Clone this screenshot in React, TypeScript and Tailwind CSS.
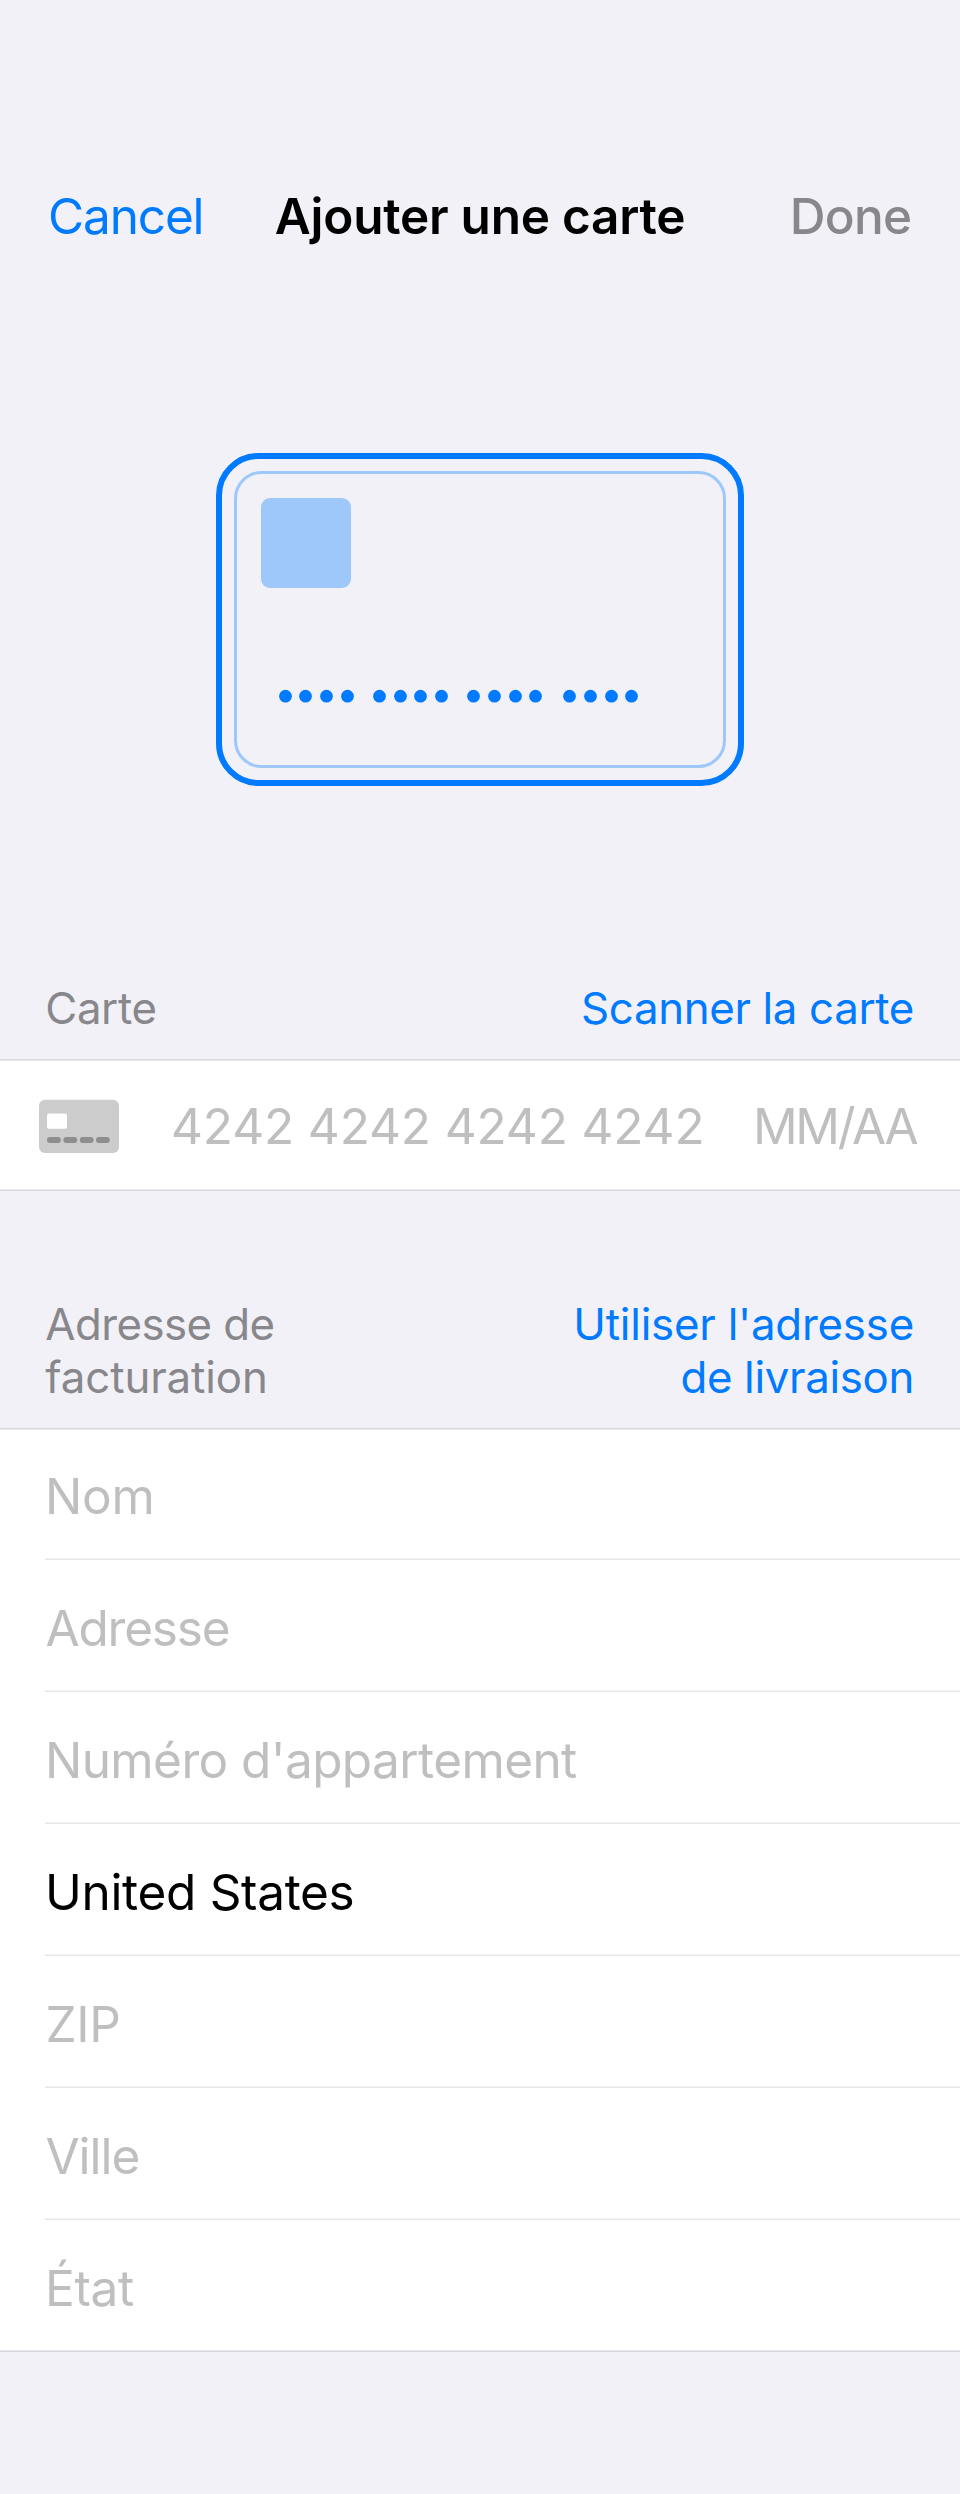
type FieldProps = { text: string; spacing: string; inset: string; filled?: boolean; last?: boolean };

const fields: FieldProps[] = [
  { text: 'Nom', spacing: 'tracking-[-0.29px]', inset: 'pl-[45px]' },
  { text: 'Adresse', spacing: 'tracking-[-1.2px]', inset: 'pl-[45.5px]' },
  { text: "Numéro d'appartement", spacing: 'tracking-[-0.6px]', inset: 'pl-[45px]' },
  { text: 'United States', spacing: 'tracking-[-0.32px]', inset: 'pl-[45px]', filled: true },
  { text: 'ZIP', spacing: 'tracking-[-0.36px]', inset: 'pl-[45.5px]' },
  { text: 'Ville', spacing: 'tracking-[-1.05px]', inset: 'pl-[45.5px]' },
  { text: 'État', spacing: 'tracking-[-0.3px]', inset: 'pl-[45px]', last: true },
];

function Field({ text, spacing, inset, filled, last }: FieldProps) {
  return (
    <div className="flex flex-1 flex-col justify-end">
      <div
        className={`pb-[32px] text-[49.5px] leading-[60px] whitespace-nowrap ${inset} ${spacing} ${filled ? 'text-black' : 'text-[#bfbfbf]'}`}
      >
        {text}
      </div>
      {!last && <div className="ml-[45px] h-[2px] border-b border-[#e6e6e7] bg-[#f4f4f5]" />}
    </div>
  );
}

function CardIllustration() {
  const dots = [
    285.5, 305.5, 326.5, 347.5, 379.5, 400.5, 420.5, 441.5, 473.5, 494.5, 515.5, 535.5, 569.5, 590.5, 611.5, 631.5,
  ];
  return (
    <svg width="528" height="333" viewBox="216 453 528 333" fill="none" aria-hidden="true">
      <rect x="219" y="456" width="522" height="327" rx="39.5" stroke="#007aff" strokeWidth="6" />
      <rect x="235.5" y="472.5" width="489" height="294" rx="26" stroke="#9fc8fa" strokeWidth="3" />
      <rect x="261" y="498" width="90" height="90" rx="9" fill="#9fc8fa" />
      {dots.map((x) => (
        <circle key={x} cx={x} cy="696.2" r="6.35" fill="#007aff" />
      ))}
    </svg>
  );
}

function CardIcon() {
  return (
    <svg className="mt-[38px] self-start" width="80" height="55" viewBox="39 1099 80 55" aria-hidden="true">
      <rect x="39" y="1099.8" width="80" height="53.3" rx="6" fill="#cccccc" />
      <rect x="47" y="1113.4" width="20" height="15.3" rx="2" fill="#fff" />
      {[47, 63.4, 79.8, 96].map((x) => (
        <rect key={x} x={x} y="1136.9" width="13.8" height="6.2" rx="3" fill="#8e8e8e" />
      ))}
    </svg>
  );
}

export default function App() {
  return (
    <main className="flex h-[2494px] w-[960px] flex-col overflow-hidden bg-[#f2f1f7] font-['Inter',sans-serif]">
      <header className="grid h-[453px] grid-cols-[1fr_auto_1fr] items-start pt-[186px] text-[49.5px] leading-[60px] whitespace-nowrap">
        <button className="justify-self-start pl-[48px] text-left tracking-[-1.15px] text-[#007aff]">Cancel</button>
        <h1 className="font-semibold tracking-[-0.25px] text-black">Ajouter une carte</h1>
        <button className="justify-self-end pr-[48.5px] font-medium tracking-[-0.7px] text-[#88878c]">Done</button>
      </header>

      <div className="flex h-[333px] justify-center">
        <CardIllustration />
      </div>

      <section className="flex flex-col">
        <div className="flex h-[273px] items-end justify-between pr-[46px] pb-[24px] pl-[45.3px] text-[43.8px] leading-[53px]">
          <h2 className="tracking-[-0.38px] text-[#88878c]">Carte</h2>
          <button className="tracking-[-0.34px] text-[#007aff]">Scanner la carte</button>
        </div>
        <div className="h-[2px] border-t border-[#d9d8de] bg-[#e9e9ec]" />
        <div className="flex h-[128px] items-center bg-white pl-[39px] text-[49.5px] leading-[60px] whitespace-nowrap text-[#bfbfbf]">
          <CardIcon />
          <span className="ml-[52px] w-[582px] pt-[2px] tracking-[-0.13px]">4242 4242 4242 4242</span>
          <span className="pt-[2px] tracking-[-2.35px]">MM/AA</span>
        </div>
        <div className="h-[2px] border-b border-[#d9d8de] bg-[#e9e9ec]" />
      </section>

      <section className="flex flex-col">
        <div className="flex h-[237px] items-end justify-between pr-[46px] pb-[24px] pl-[45.3px] text-[43.8px] leading-[53px] whitespace-nowrap">
          <h2 className="text-[#88878c]">
            <span className="block tracking-[-0.55px]">Adresse de</span>
            <span className="block tracking-[-0.09px]">facturation</span>
          </h2>
          <button className="text-right text-[#007aff]">
            <span className="block tracking-[-0.21px]">Utiliser l'adresse</span>
            <span className="block tracking-[-0.32px]">de livraison</span>
          </button>
        </div>
        <div className="h-[2px] border-t border-[#d9d8de] bg-[#e9e9ec]" />
        <div className="h-[920px] overflow-hidden bg-white">
          <div className="-mt-[2px] flex h-[922px] flex-col">
            <div className="flex h-[792px] flex-col">
              {fields.slice(0, 6).map((f) => (
                <Field key={f.text} {...f} />
              ))}
            </div>
            <div className="flex h-[130px] flex-col">
              <Field {...fields[6]} />
            </div>
          </div>
        </div>
        <div className="h-[2px] border-b border-[#d9d8de] bg-[#e9e9ec]" />
      </section>
    </main>
  );
}
